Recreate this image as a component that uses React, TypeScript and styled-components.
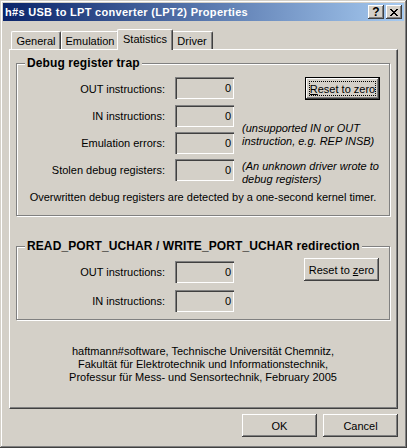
import React from "react";
import styled, { createGlobalStyle, css } from "styled-components";

const Global = createGlobalStyle`
  html, body { margin: 0; padding: 0; background: #d4d0c8; }
  body {
    font-family: "Liberation Sans", Tahoma, Arial, sans-serif;
    font-size: 11px;
    color: #000;
  }
  * { box-sizing: border-box; }
`;

const Window = styled.div`
  width: 407px;
  height: 448px;
  padding: 3px;
  display: flex;
  flex-direction: column;
  background: #d4d0c8;
  box-shadow: inset -1px -1px 0 #404040, inset 1px 1px 0 #d4d0c8,
    inset -2px -2px 0 #808080, inset 2px 2px 0 #fff;
`;

const TitleBar = styled.div`
  height: 18px;
  display: flex;
  align-items: center;
  padding: 0 2px 0 2px;
  background: linear-gradient(to right, #0a246a, #a6caf0);
  color: #fff;
  font-weight: bold;
  font-size: 11px;
`;

const TitleText = styled.span`
  flex: 1;
  white-space: nowrap;
  letter-spacing: 0.3px;
`;

const CaptionButton = styled.div<{ $gap?: number }>`
  width: 16px;
  height: 14px;
  margin-left: ${(p) => p.$gap ?? 0}px;
  display: flex;
  align-items: center;
  justify-content: center;
  background: #d4d0c8;
  color: #000;
  font-weight: bold;
  font-size: 12px;
  line-height: 14px;
  box-shadow: inset -1px -1px 0 #404040, inset 1px 1px 0 #fff,
    inset -2px -2px 0 #808080;
`;

const Content = styled.div`
  flex: 1;
  display: flex;
  flex-direction: column;
  padding: 8px 6px 8px 6px;
`;

const TabRow = styled.div`
  height: 20px;
  display: flex;
  align-items: flex-end;
  padding-left: 2px;
`;

const Tab = styled.div<{ $selected?: boolean; $w: number }>`
  width: ${(p) => p.$w}px;
  height: 18px;
  display: flex;
  align-items: center;
  justify-content: center;
  background: #d4d0c8;
  border-top: 1px solid #fff;
  border-left: 1px solid #fff;
  border-right: 1px solid #404040;
  border-radius: 2px 2px 0 0;
  box-shadow: inset -1px 0 0 #808080;
  white-space: nowrap;
  ${(p) =>
    p.$selected &&
    css`
      width: ${p.$w + 4}px;
      height: 21px;
      margin: 0 -2px -1px -2px;
      padding-bottom: 3px;
      position: relative;
      z-index: 1;
    `}
`;

const Panel = styled.div`
  flex: 1;
  display: flex;
  flex-direction: column;
  padding: 13px 7px 0 6px;
  border-top: 1px solid #fff;
  border-left: 1px solid #fff;
  border-right: 1px solid #404040;
  border-bottom: 1px solid #404040;
  box-shadow: inset -1px -1px 0 #808080;
`;

const GroupBox = styled.div<{ $h: number; $mt?: number }>`
  position: relative;
  height: ${(p) => p.$h}px;
  margin-top: ${(p) => p.$mt ?? 0}px;
  border: 1px solid #808080;
  box-shadow: 1px 1px 0 #fff, inset 1px 1px 0 #fff;
`;

const Legend = styled.div`
  position: absolute;
  top: -7px;
  left: 8px;
  padding: 0 2px;
  line-height: 13px;
  font-size: 12px;
  letter-spacing: 0.1px;
  font-weight: bold;
  background: #d4d0c8;
  white-space: nowrap;
`;

const FieldGrid = styled.div<{ $rows: string; $gap: number; $pt: number }>`
  display: grid;
  grid-template-columns: 148px 59px 1fr;
  grid-template-rows: ${(p) => p.$rows};
  column-gap: 10px;
  row-gap: ${(p) => p.$gap}px;
  padding-top: ${(p) => p.$pt}px;
`;

const Label = styled.div<{ $row: number }>`
  grid-column: 1;
  grid-row: ${(p) => p.$row};
  align-self: center;
  text-align: right;
  white-space: nowrap;
`;

const Field = styled.div<{ $row: number }>`
  grid-column: 2;
  grid-row: ${(p) => p.$row};
  align-self: start;
  height: 22px;
  display: flex;
  align-items: center;
  justify-content: flex-end;
  padding-right: 3px;
  background: #d4d0c8;
  box-shadow: inset 1px 1px 0 #808080, inset 2px 2px 0 #404040,
    inset -1px -1px 0 #fff, inset -2px -2px 0 #d4d0c8;
`;

const Note = styled.div<{ $row: string; $align: "start" | "end"; $mt?: number; $mb?: number }>`
  grid-column: 3;
  grid-row: ${(p) => p.$row};
  align-self: ${(p) => p.$align};
  margin: ${(p) => p.$mt ?? 0}px 0 ${(p) => p.$mb ?? 0}px -2px;
  font-style: italic;
  line-height: 13px;
  white-space: nowrap;
`;

const PushButton = styled.div<{ $default?: boolean; $mt?: number; $mr?: number }>`
  width: 75px;
  height: 23px;
  display: flex;
  align-items: center;
  justify-content: center;
  background: #d4d0c8;
  white-space: nowrap;
  margin-top: ${(p) => p.$mt ?? 0}px;
  margin-right: ${(p) => p.$mr ?? 0}px;
  box-shadow: inset -1px -1px 0 #404040, inset 1px 1px 0 #fff,
    inset -2px -2px 0 #808080;
  ${(p) =>
    p.$default &&
    css`
      box-shadow: inset 0 0 0 1px #000, inset -2px -2px 0 #404040,
        inset 2px 2px 0 #fff, inset -3px -3px 0 #808080;
    `}
`;

const GridButton = styled(PushButton)`
  grid-column: 3;
  grid-row: 1;
  align-self: start;
  justify-self: end;
`;

const FocusRect = styled.span`
  display: flex;
  align-items: center;
  justify-content: center;
  width: 67px;
  height: 15px;
  border: 1px dotted #000;
`;

const Centered = styled.div<{ $mt: number }>`
  margin-top: ${(p) => p.$mt}px;
  text-align: center;
  line-height: 13px;
  white-space: nowrap;
`;

const ButtonRow = styled.div`
  display: flex;
  justify-content: flex-end;
  gap: 6px;
  margin-top: 5px;
`;

const CloseGlyph = () => (
  <svg width="8" height="7" viewBox="0 0 8 7" shapeRendering="crispEdges">
    <path
      fill="#000"
      d="M0 0h2v1H0z M6 0h2v1H6z M1 1h2v1H1z M5 1h2v1H5z M2 2h4v1H2z M3 3h2v1H3z M2 4h4v1H2z M1 5h2v1H1z M5 5h2v1H5z M0 6h2v1H0z M6 6h2v1H6z"
    />
  </svg>
);

export default function App() {
  return (
    <>
      <Global />
      <Window>
        <TitleBar>
          <TitleText>h#s USB to LPT converter (LPT2) Properties</TitleText>
          <CaptionButton>?</CaptionButton>
          <CaptionButton $gap={2}>
            <CloseGlyph />
          </CaptionButton>
        </TitleBar>
        <Content>
          <TabRow>
            <Tab $w={50}>General</Tab>
            <Tab $w={58}>Emulation</Tab>
            <Tab $w={52} $selected>
              Statistics
            </Tab>
            <Tab $w={42}>Driver</Tab>
          </TabRow>
          <Panel>
            <GroupBox $h={153}>
              <Legend>Debug register trap</Legend>
              <FieldGrid $rows="23px 22px 22px 22px" $gap={5} $pt={13}>
                <Label $row={1}>OUT instructions:</Label>
                <Field $row={1}>0</Field>
                <GridButton $default $mr={9}>
                  <FocusRect>
                    <span>
                      <u>R</u>eset to zero
                    </span>
                  </FocusRect>
                </GridButton>
                <Label $row={2}>IN instructions:</Label>
                <Field $row={2}>0</Field>
                <Label $row={3}>Emulation errors:</Label>
                <Field $row={3}>0</Field>
                <Note $row="2 / 4" $align="end" $mb={6}>
                  (unsupported IN or OUT
                  <br />
                  instruction, e.g. REP INSB)
                </Note>
                <Label $row={4}>Stolen debug registers:</Label>
                <Field $row={4}>0</Field>
                <Note $row="4" $align="start" $mt={1}>
                  (An unknown driver wrote to
                  <br />
                  debug registers)
                </Note>
              </FieldGrid>
              <Centered $mt={10}>
                Overwritten debug registers are detected by a one-second kernel timer.
              </Centered>
            </GroupBox>
            <GroupBox $h={74} $mt={30}>
              <Legend>READ_PORT_UCHAR / WRITE_PORT_UCHAR redirection</Legend>
              <FieldGrid $rows="22px 22px" $gap={7} $pt={14}>
                <Label $row={1}>OUT instructions:</Label>
                <Field $row={1}>0</Field>
                <GridButton $mt={-3} $mr={10}>
                  <span>
                    Reset to <u>z</u>ero
                  </span>
                </GridButton>
                <Label $row={2}>IN instructions:</Label>
                <Field $row={2}>0</Field>
              </FieldGrid>
            </GroupBox>
            <Centered $mt={25}>
              haftmann#software, Technische Universität Chemnitz,
              <br />
              Fakultät für Elektrotechnik und Informationstechnik,
              <br />
              Professur für Mess- und Sensortechnik, February 2005
            </Centered>
          </Panel>
          <ButtonRow>
            <PushButton>OK</PushButton>
            <PushButton>Cancel</PushButton>
          </ButtonRow>
        </Content>
      </Window>
    </>
  );
}
